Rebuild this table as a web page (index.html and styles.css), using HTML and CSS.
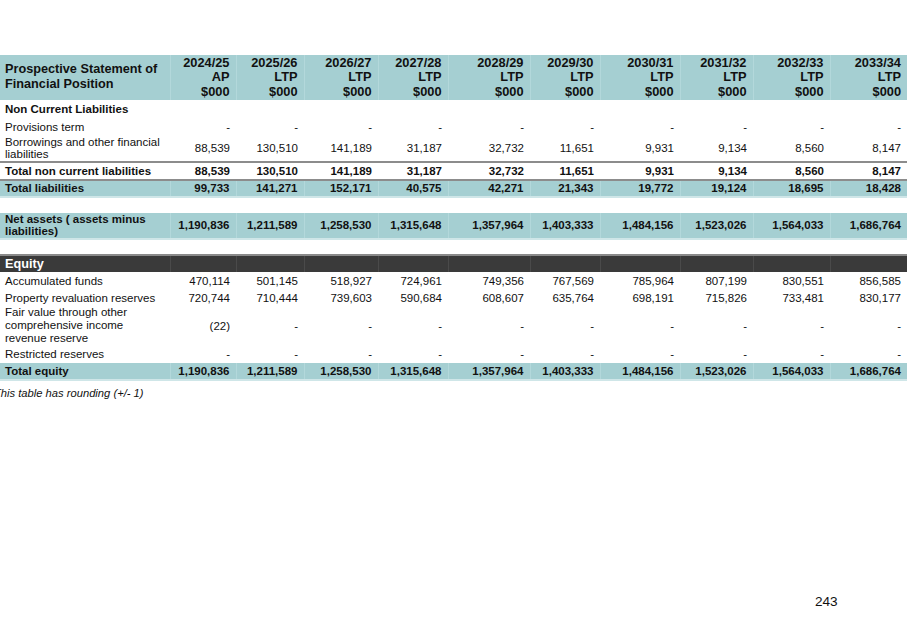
FILE: index.html
```html
<!DOCTYPE html>
<html>
<head>
<meta charset="utf-8">
<link rel="stylesheet" href="styles.css">
</head>
<body>
<div class="page">
<table class="fin">
<colgroup>
<col class="c-label">
<col style="width:66px">
<col style="width:68px">
<col style="width:74px">
<col style="width:70px">
<col style="width:82px">
<col style="width:70px">
<col style="width:80px">
<col style="width:73px">
<col style="width:77px">
<col style="width:77px">
</colgroup>
<thead>
<tr class="head">
<th class="lbl">Prospective Statement of Financial Position</th>
<th>2024/25<br>AP<br>$000</th>
<th>2025/26<br>LTP<br>$000</th>
<th>2026/27<br>LTP<br>$000</th>
<th>2027/28<br>LTP<br>$000</th>
<th>2028/29<br>LTP<br>$000</th>
<th>2029/30<br>LTP<br>$000</th>
<th>2030/31<br>LTP<br>$000</th>
<th>2031/32<br>LTP<br>$000</th>
<th>2032/33<br>LTP<br>$000</th>
<th>2033/34<br>LTP<br>$000</th>
</tr>
</thead>
<tbody>
<tr class="sect"><td class="lbl" colspan="11">Non Current Liabilities</td></tr>
<tr class="r17"><td class="lbl">Provisions term</td><td>-</td><td>-</td><td>-</td><td>-</td><td>-</td><td>-</td><td>-</td><td>-</td><td>-</td><td>-</td></tr>
<tr class="r26"><td class="lbl">Borrowings and other financial liabilities</td><td>88,539</td><td>130,510</td><td>141,189</td><td>31,187</td><td>32,732</td><td>11,651</td><td>9,931</td><td>9,134</td><td>8,560</td><td>8,147</td></tr>
<tr class="sub"><td class="lbl">Total non current liabilities</td><td>88,539</td><td>130,510</td><td>141,189</td><td>31,187</td><td>32,732</td><td>11,651</td><td>9,931</td><td>9,134</td><td>8,560</td><td>8,147</td></tr>
<tr class="total tl"><td class="lbl">Total liabilities</td><td>99,733</td><td>141,271</td><td>152,171</td><td>40,575</td><td>42,271</td><td>21,343</td><td>19,772</td><td>19,124</td><td>18,695</td><td>18,428</td></tr>
<tr class="gap"><td colspan="11"></td></tr>
<tr class="total net"><td class="lbl">Net assets ( assets minus liabilities)</td><td>1,190,836</td><td>1,211,589</td><td>1,258,530</td><td>1,315,648</td><td>1,357,964</td><td>1,403,333</td><td>1,484,156</td><td>1,523,026</td><td>1,564,033</td><td>1,686,764</td></tr>
<tr class="gap g2"><td colspan="11"></td></tr>
<tr class="dark"><td class="lbl">Equity</td><td></td><td></td><td></td><td></td><td></td><td></td><td></td><td></td><td></td><td></td></tr>
<tr class="r18"><td class="lbl">Accumulated funds</td><td>470,114</td><td>501,145</td><td>518,927</td><td>724,961</td><td>749,356</td><td>767,569</td><td>785,964</td><td>807,199</td><td>830,551</td><td>856,585</td></tr>
<tr class="r16"><td class="lbl">Property revaluation reserves</td><td>720,744</td><td>710,444</td><td>739,603</td><td>590,684</td><td>608,607</td><td>635,764</td><td>698,191</td><td>715,826</td><td>733,481</td><td>830,177</td></tr>
<tr class="r40"><td class="lbl">Fair value through other comprehensive income revenue reserve</td><td>(22)</td><td>-</td><td>-</td><td>-</td><td>-</td><td>-</td><td>-</td><td>-</td><td>-</td><td>-</td></tr>
<tr class="r17"><td class="lbl">Restricted reserves</td><td>-</td><td>-</td><td>-</td><td>-</td><td>-</td><td>-</td><td>-</td><td>-</td><td>-</td><td>-</td></tr>
<tr class="total te"><td class="lbl">Total equity</td><td>1,190,836</td><td>1,211,589</td><td>1,258,530</td><td>1,315,648</td><td>1,357,964</td><td>1,403,333</td><td>1,484,156</td><td>1,523,026</td><td>1,564,033</td><td>1,686,764</td></tr>
</tbody>
</table>
<p class="note">This table has rounding (+/- 1)</p>
<div class="pnum">243</div>
</div>
</body>
</html>
```

FILE: styles.css
```css
html, body {
  margin: 0;
  padding: 0;
  background: #ffffff;
}
body {
  font-family: "Liberation Sans", Arial, sans-serif;
  color: #111;
  width: 907px;
  height: 626px;
  overflow: hidden;
}
.page {
  position: relative;
  width: 907px;
  height: 626px;
  padding-top: 55px;
  box-sizing: border-box;
}
.fin {
  width: 907px;
  border-collapse: collapse;
  table-layout: fixed;
  font-size: 11.5px;
  line-height: 12.5px;
}
.c-label { width: 170px; }
.fin td, .fin th {
  padding: 0 6px 0 0;
  text-align: right;
  vertical-align: middle;
  white-space: nowrap;
}
.fin td.lbl, .fin th.lbl {
  text-align: left;
  padding: 0 6px 0 5px;
  white-space: normal;
}
.head {
  height: 43px;
  background: #a5cfd2;
}
.head th {
  font-size: 12.8px;
  line-height: 14.3px;
  font-weight: bold;
  border-right: 1px solid #b3d8db;
  padding-top: 1px;
  padding-bottom: 1px;
}
.head th.lbl {
  font-size: 12.7px;
  line-height: 15px;
}
.head th:last-child { border-right: none; }
.sect { height: 19px; }
.sect td { font-weight: bold; vertical-align: middle; }
.r16 { height: 16px; }
.r17 { height: 17px; }
.r18 { height: 18px; }
.r26 { height: 26px; }
.r26 td.lbl { line-height: 12px; }
.r40 { height: 40px; }
.r40 td.lbl { line-height: 13px; }
.sub { height: 18px; }
.sub td {
  font-weight: bold;
  border-top: 2px solid #8c8c8c;
}
.total td {
  font-weight: bold;
  background: #a5cfd2;
  border-right: 1px solid #b3d8db;
}
.total td:last-child { border-right: none; }
.tl { height: 17px; }
.tl td {
  border-top: 2px solid #8c8c8c;
  border-bottom: 2px solid #cfe6e8;
}
.gap { height: 16px; }
.gap td { padding: 0; }
.net { height: 25px; }
.net td { border-bottom: 2px solid #cfe6e8; }
.net td.lbl { line-height: 12.5px; }
.g2 { height: 16px; }
.dark { height: 17px; }
.dark td {
  background: #3a3a3a;
  color: #ffffff;
  font-weight: bold;
  font-size: 12.7px;
  border-top: 2px solid #8a8a8a;
  border-right: 1px solid #4a4a4a;
}
.dark td:last-child { border-right: none; }
.te { height: 17px; }
.te td { border-bottom: 2px solid #cfe6e8; }
.note {
  margin: 6px 0 0 -6px;
  font-style: italic;
  font-size: 11.2px;
  line-height: 13px;
  color: #111;
}
.pnum {
  position: absolute;
  left: 815px;
  top: 594px;
  font-size: 13.6px;
  line-height: 16px;
  color: #111;
}
```
